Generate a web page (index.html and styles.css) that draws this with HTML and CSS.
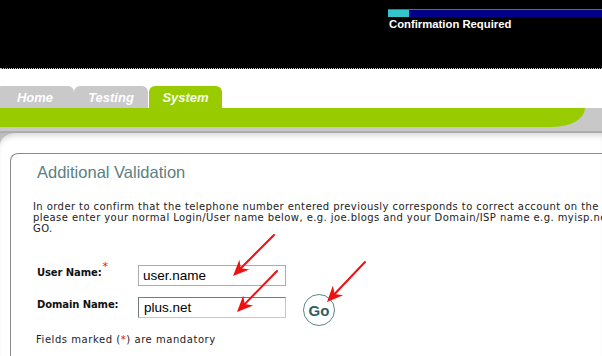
FILE: index.html
```html
<!DOCTYPE html>
<html>
<head>
<meta charset="utf-8">
<link rel="stylesheet" href="styles.css">
</head>
<body>
<div class="header">
  <div class="status">
    <div class="progress"><div class="progress-fill"></div></div>
    <div class="status-text">Confirmation Required</div>
  </div>
</div>
<nav class="tabs">
  <div class="tab tab-home">Home</div>
  <div class="tab tab-testing">Testing</div>
  <div class="tab tab-active">System</div>
</nav>
<div class="band"><div class="band-green"></div></div>
<div class="main-wrap">
  <div class="main">
    <div class="card">
      <h1 class="title">Additional Validation</h1>
      <p class="intro">In order to confirm that the telephone number entered previously corresponds to correct account on the network,<br>please enter your normal Login/User name below, e.g. joe.blogs and your Domain/ISP name e.g. myisp.net and click<br>GO.</p>
      <div class="form">
        <div class="row">
          <span class="label">User Name:<span class="req req-sup">*</span></span>
          <div class="field">user.name</div>
        </div>
        <div class="row">
          <span class="label">Domain Name:</span>
          <div class="field field-focus">plus.net</div>
          <div class="go">Go</div>
        </div>
      </div>
      <p class="note">Fields marked (<span class="req">*</span>) are mandatory</p>
    </div>
  </div>
</div>
<svg class="annotations" width="602" height="356" viewBox="0 0 602 356">
  <g stroke="#f01010" stroke-width="2" fill="none" stroke-linecap="round">
    <line x1="240.8" y1="268.2" x2="274" y2="235"/>
    <line x1="244.7" y1="304.1" x2="277" y2="271"/>
    <line x1="334.6" y1="294" x2="365" y2="262"/>
  </g>
  <g fill="#f01010">
    <polygon points="233,276 249.3,269.6 240.8,268.2 239.4,259.7"/>
    <polygon points="237,312 253.2,305.4 244.7,304.1 243.2,295.6"/>
    <polygon points="327,302 343.1,295.2 334.6,294 332.9,285.6"/>
  </g>
</svg>
</body>
</html>
```

FILE: styles.css
```css
html, body {
  margin: 0;
  padding: 0;
}
body {
  width: 602px;
  height: 356px;
  overflow: hidden;
  position: relative;
  background: #fff;
  font-family: "DejaVu Sans", Verdana, sans-serif;
}

/* header */
.header {
  height: 68px;
  background: #000;
  border-bottom: 1px dotted #bdbdbd;
  display: flex;
  justify-content: flex-end;
}
.status {
  width: 214px;
  padding-top: 9px;
}
.progress {
  height: 8px;
  background: #000088;
  border-top: 1px solid #2a7f9a;
  box-sizing: border-box;
  display: flex;
}
.progress-fill {
  width: 21px;
  background: #33c4cc;
}
.status-text {
  margin-top: 1px;
  padding-left: 1px;
  color: #fff;
  font-family: "Liberation Sans", Arial, sans-serif;
  font-weight: bold;
  font-size: 11.3px;
  white-space: nowrap;
}

/* tabs */
.tabs {
  display: flex;
  margin-top: 17px;
  height: 22px;
}
.tab {
  display: flex;
  align-items: center;
  justify-content: center;
  background: #c9c9c9;
  color: #fff;
  font-family: "Liberation Sans", Arial, sans-serif;
  font-style: italic;
  font-weight: bold;
  font-size: 13px;
  line-height: 15px;
  border-radius: 6px 6px 0 0;
}
.tab-home {
  margin-left: -4px;
  width: 78px;
}
.tab-testing {
  width: 74px;
}
.tab-active {
  margin-left: 1px;
  width: 73px;
  background: #99cc00;
  color: #f4fbe6;
}

/* green band */
.band {
  height: 23px;
  background: #c8c8c8;
  border-bottom: 2px solid #adadad;
}
.band-green {
  width: 585px;
  height: 19px;
  background: #99cc00;
  border-bottom-right-radius: 32px 19px;
}

/* main */
.main-wrap {
  background: #bdbdbd;
}
.main {
  background: #fff;
  border-top-left-radius: 16px 12px;
  box-shadow: inset 0 6px 6px -4px rgba(0, 0, 0, 0.18);
  padding: 20px 0 0 10px;
  height: 210px;
}
.card {
  border-top: 1px solid #8a8a8a;
  border-left: 1px solid #8a8a8a;
  border-top-left-radius: 8px;
  padding: 9px 0 0 22px;
  height: 200px;
}
.title {
  margin: 0 0 0 4px;
  font-family: "Liberation Sans", Arial, sans-serif;
  font-weight: normal;
  font-size: 16.5px;
  line-height: 18px;
  color: #5b8083;
}
.intro {
  margin: 20px 0 0 0;
  font-size: 10px;
  line-height: 11px;
  letter-spacing: 0.42px;
  color: #222;
  white-space: nowrap;
}

/* form */
.form {
  margin-top: 31px;
  display: flex;
  flex-direction: column;
  gap: 11px;
}
.row {
  display: flex;
  align-items: flex-start;
  height: 21px;
}
.label {
  width: 101px;
  padding-left: 4px;
  margin-top: 2px;
  font-size: 10px;
  line-height: 12px;
  font-weight: bold;
  letter-spacing: -0.1px;
  color: #111;
  white-space: nowrap;
}
.req {
  color: #e01010;
}
.req-sup {
  position: relative;
  top: -6px;
  margin-left: 1px;
  font-size: 11px;
  font-weight: normal;
}
.field {
  width: 148px;
  height: 21px;
  box-sizing: border-box;
  border: 1px solid #ababab;
  padding-left: 4px;
  font-family: "Liberation Sans", Arial, sans-serif;
  font-size: 13.5px;
  line-height: 19px;
  color: #000;
}
.field-focus {
  border-color: #6f7c80 #a6d2da #a6d2da #6f7c80;
  padding-left: 5px;
  line-height: 20px;
}
.go {
  margin-left: 17px;
  margin-top: -3px;
  width: 32px;
  height: 32px;
  box-sizing: border-box;
  border: 1.5px solid #5d8588;
  border-radius: 50%;
  display: flex;
  align-items: center;
  justify-content: center;
  font-family: "Liberation Sans", Arial, sans-serif;
  font-weight: bold;
  font-size: 15px;
  color: #2f5d62;
}
.note {
  margin: 16px 0 0 3px;
  font-size: 10px;
  line-height: 12px;
  letter-spacing: 0.55px;
  color: #222;
}

/* annotation overlay */
.annotations {
  position: absolute;
  left: 0;
  top: 0;
  pointer-events: none;
}
```
